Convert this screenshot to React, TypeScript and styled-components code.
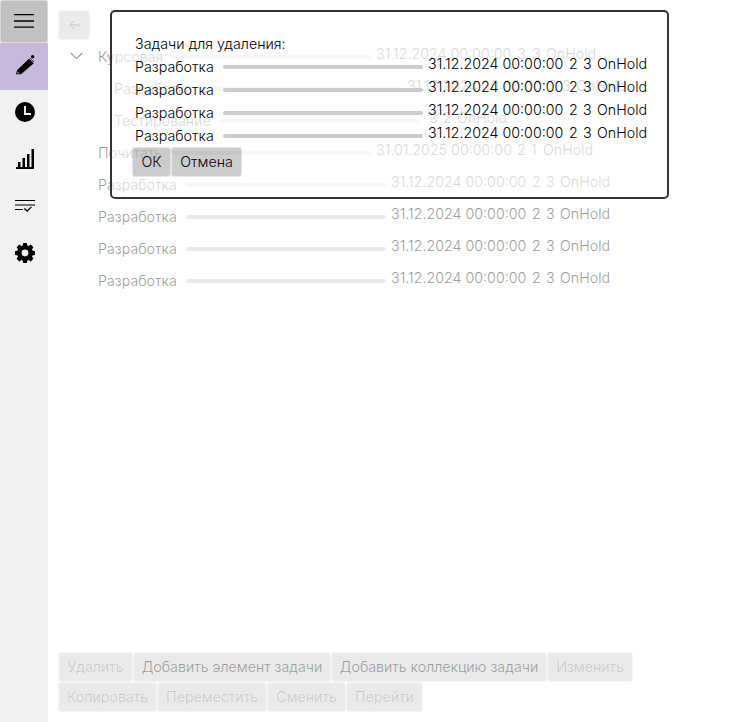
import React from "react";
import styled, { createGlobalStyle } from "styled-components";

const GlobalStyle = createGlobalStyle`
  * { box-sizing: border-box; }
  body { margin: 0; background: #fff; overflow: hidden; }
`;

const Window = styled.div`
  position: relative;
  display: flex;
  width: 731px;
  height: 722px;
  background: #fff;
  color: #000;
  font: 300 14.25px/18px Inter, sans-serif;
  white-space: nowrap;
`;

const Sidebar = styled.nav`
  width: 48px;
  flex: none;
  background: #f1f1f1;
`;

const MenuButton = styled.button`
  display: flex;
  align-items: center;
  justify-content: center;
  width: 48px;
  height: 43px;
  padding: 0 0 1px;
  border: 1px solid #dadada;
  border-radius: 3px;
  background: #c1c1c1;
`;

const NavItem = styled.div<{ $active?: boolean }>`
  display: flex;
  align-items: center;
  justify-content: center;
  height: 47px;
  padding: 0 0 ${(p) => (p.$active ? 3 : 4)}px 2px;
  background: ${(p) => (p.$active ? "#c7b8dd" : "transparent")};
`;

const Main = styled.main`
  display: flex;
  flex-direction: column;
  flex: 1;
  padding: 10px;
  opacity: 0.4;
`;

const Button = styled.button<{ $width: number; $disabled?: boolean }>`
  width: ${(p) => p.$width}px;
  height: 30px;
  padding: 0;
  border: 1px solid rgba(0, 0, 0, 0.1);
  border-radius: 3px;
  background: rgba(0, 0, 0, 0.2);
  background-clip: padding-box;
  color: ${(p) => (p.$disabled ? "rgba(0, 0, 0, 0.42)" : "#000")};
  font: inherit;
  text-align: center;
  display: flex;
  align-items: center;
  justify-content: center;
`;

const Tree = styled.div`
  display: flex;
  flex-direction: column;
  flex: 1;
  padding-top: 1px;
`;

const TreeRow = styled.div<{ $indent: number }>`
  display: flex;
  align-items: center;
  height: 32px;
  padding-left: ${(p) => 40 + p.$indent * 16}px;
`;

const Expander = styled.svg`
  flex: none;
  margin: -3px 15px 0 -28px;
`;

const TaskLine = styled.div`
  display: flex;
  align-items: center;
  height: 23px;
`;

const Name = styled.span<{ $width: number }>`
  width: ${(p) => p.$width}px;
  flex: none;
`;

const Progress = styled.span`
  width: 200px;
  height: 4px;
  flex: none;
  border-radius: 2px;
  background: #ccc;
`;

const Fields = styled.span`
  display: flex;
  margin: -6px 0 0 5px;
`;

const Field = styled.span<{ $width?: number }>`
  width: ${(p) => (p.$width === undefined ? "auto" : `${p.$width}px`)};
  flex: none;
`;

const ButtonRow = styled.div`
  display: flex;
`;

const Dialog = styled.section`
  position: absolute;
  left: 110px;
  top: 10px;
  width: 559px;
  height: 189px;
  padding: 23px 20px 0 23px;
  border: 2px solid #333;
  border-radius: 5px;
  background: rgba(255, 255, 255, 0.6);
`;

const DialogTitle = styled.div`
  height: 20px;
  line-height: 18px;
`;

const DialogButtons = styled(ButtonRow)`
  margin: 0 0 0 -3px;
`;

interface Task {
  name: string;
  nameWidth: number;
  date: string;
  priority: string;
  priorityWidth: number;
  level: string;
  indent: number;
  expanded?: boolean;
}

const work: Task = {
  name: "Разработка", nameWidth: 88, date: "31.12.2024 00:00:00",
  priority: "2", priorityWidth: 14, level: "3", indent: 0,
};

const tasks: Task[] = [
  { ...work, name: "Курсовая", nameWidth: 73, priority: "3", priorityWidth: 15, expanded: true },
  { ...work, indent: 1 },
  { ...work, name: "Тестирование", nameWidth: 105, date: "", priority: "3", level: "2", indent: 1 },
  { ...work, name: "Почитать", nameWidth: 73, date: "31.01.2025 00:00:00", level: "1" },
  work, work, work, work,
];

const TaskInfo = ({ task }: { task: Task }) => (
  <>
    <Name $width={task.nameWidth}>{task.name}</Name>
    <Progress />
    <Fields>
      <Field $width={task.date ? 141 : 5}>{task.date}</Field>
      <Field $width={task.priorityWidth}>{task.priority}</Field>
      <Field $width={task.level === "1" ? 12 : 14}>{task.level}</Field>
      <Field>OnHold</Field>
    </Fields>
  </>
);

const MenuIcon = () => (
  <svg width="20" height="16" viewBox="0 0 20 16" stroke="#000" strokeWidth="1.3">
    <path d="M0 1.6h20M0 8h20M0 14.2h20" />
  </svg>
);

const PencilIcon = () => (
  <svg width="20" height="20" viewBox="0 0 20 20">
    <path d="M1 19.3 2.2 15 14 3.8 18.8 8.2 6 19.3Z" />
    <path d="m2.6 16.8 1.9 1.6-2.2.2Z" fill="#c7b8dd" />
    <circle cx="17.6" cy="1.7" r="1.7" />
    <path d="m14.9 3.1 4 3.8" stroke="#000" strokeWidth=".8" />
  </svg>
);

const ClockIcon = () => (
  <svg width="20" height="20" viewBox="0 0 20 20">
    <circle cx="10" cy="10" r="10" />
    <path d="M10 4v8h6" fill="none" stroke="#fff" strokeWidth="1.8" />
  </svg>
);

const BarsIcon = () => (
  <svg width="18" height="20" viewBox="0 0 18 20">
    <path d="M0 18h18v2H0ZM2 13h2.5v5H2ZM6.5 9H9v9H6.5ZM11 5h2.5v13H11ZM15.5 0H18v20h-2.5Z" />
  </svg>
);

const ListIcon = () => (
  <svg width="20" height="12" viewBox="0 0 20 12">
    <path d="M0 0h20v1H0ZM0 9h8v1H0Z" />
    <path d="M0 4h20v2H0Z" fill="#777" />
    <path d="m9.3 8.5 2.9 2.5 4.3-4.1" fill="none" stroke="#000" strokeWidth="1.3" />
  </svg>
);

const GearIcon = () => (
  <svg width="20" height="20" viewBox="0 0 20 20">
    <path
      fillRule="evenodd"
      d="M8.2 0h3.6l.6 2.5 1.2.5 2.2-1.4 2.6 2.6L17 6.4l.5 1.2 2.5.6v3.6l-2.5.6-.5 1.2 1.4 2.2-2.6 2.6-2.2-1.4-1.2.5-.6 2.5H8.2l-.6-2.5-1.2-.5-2.2 1.4-2.6-2.6L3 13.6l-.5-1.2L0 11.8V8.2l2.5-.6L3 6.4 1.6 4.2l2.6-2.6L6.4 3l1.2-.5ZM10 6.6a3.4 3.4 0 1 0 0 6.8 3.4 3.4 0 0 0 0-6.8Z"
    />
  </svg>
);

const Chevron = () => (
  <Expander width="13" height="8" viewBox="0 0 13 8" fill="none" stroke="#000" strokeWidth="1.1">
    <path d="m.8 1 5.7 5.6L12.2 1" />
  </Expander>
);

const BackIcon = () => (
  <svg width="11" height="10" viewBox="0 0 11 10" fill="none" stroke="currentColor">
    <path d="M11 5H1M5 1 1 5l4 4" />
  </svg>
);

export default function App() {
  return (
    <Window>
      <GlobalStyle />
      <Sidebar>
        <MenuButton><MenuIcon /></MenuButton>
        <NavItem $active><PencilIcon /></NavItem>
        <NavItem><ClockIcon /></NavItem>
        <NavItem><BarsIcon /></NavItem>
        <NavItem><ListIcon /></NavItem>
        <NavItem><GearIcon /></NavItem>
      </Sidebar>
      <Main>
        <Button $width={32} $disabled><BackIcon /></Button>
        <Tree>
          {tasks.map((task, i) => (
            <TreeRow key={i} $indent={task.indent}>
              {task.expanded && <Chevron />}
              <TaskInfo task={task} />
            </TreeRow>
          ))}
        </Tree>
        <ButtonRow>
          <Button $width={75} $disabled>Удалить</Button>
          <Button $width={198}>Добавить элемент задачи</Button>
          <Button $width={216}>Добавить коллекцию задачи</Button>
          <Button $width={86} $disabled>Изменить</Button>
        </ButtonRow>
        <ButtonRow>
          <Button $width={99} $disabled>Копировать</Button>
          <Button $width={110} $disabled>Переместить</Button>
          <Button $width={79} $disabled>Сменить</Button>
          <Button $width={77} $disabled>Перейти</Button>
        </ButtonRow>
      </Main>
      <Dialog>
        <DialogTitle>Задачи для удаления:</DialogTitle>
        {[0, 1, 2, 3].map((i) => (
          <TaskLine key={i}><TaskInfo task={work} /></TaskLine>
        ))}
        <DialogButtons>
          <Button $width={39}>ОК</Button>
          <Button $width={71}>Отмена</Button>
        </DialogButtons>
      </Dialog>
    </Window>
  );
}
